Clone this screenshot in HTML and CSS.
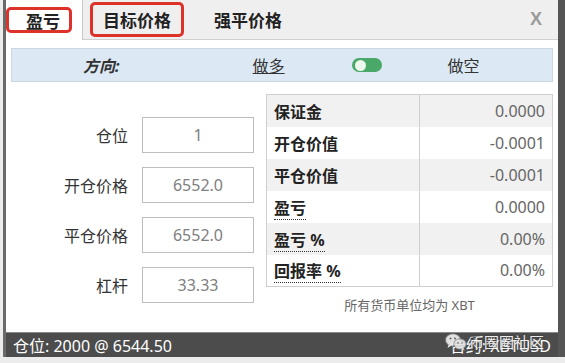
FILE: index.html
```html
<!DOCTYPE html>
<html lang="zh-CN">
<head>
    <meta charset="UTF-8">
    <meta name="viewport" content="width=device-width, initial-scale=1.0">
    <title>计算器</title>
    <link rel="stylesheet" href="styles.css">
</head>
<body>
    <div class="dialog">
        <!-- 标签栏 -->
        <div class="tabs">
            <div class="tab active"><span class="mark mark-pnl">盈亏</span></div>
            <div class="tab tab-target"><span class="mark mark-target">目标价格</span></div>
            <div class="tab tab-liq">强平价格</div>
            <div class="close">X</div>
        </div>

        <!-- 方向 -->
        <div class="direction">
            <span class="dir-label">方向:</span>
            <span class="dir-long">做多</span>
            <span class="toggle"><span class="knob"></span></span>
            <span class="dir-short">做空</span>
        </div>

        <div class="main">
            <!-- 输入 -->
            <div class="form">
                <div class="form-row">
                    <label>仓位</label>
                    <input class="field" type="text" value="1">
                </div>
                <div class="form-row">
                    <label>开仓价格</label>
                    <input class="field" type="text" value="6552.0">
                </div>
                <div class="form-row">
                    <label>平仓价格</label>
                    <input class="field" type="text" value="6552.0">
                </div>
                <div class="form-row">
                    <label>杠杆</label>
                    <input class="field" type="text" value="33.33">
                </div>
            </div>

            <!-- 结果 -->
            <div class="results">
                <table class="result-table">
                    <tr><th>保证金</th><td>0.0000</td></tr>
                    <tr><th>开仓价值</th><td>-0.0001</td></tr>
                    <tr><th>平仓价值</th><td>-0.0001</td></tr>
                    <tr><th><span class="dotted">盈亏</span></th><td>0.0000</td></tr>
                    <tr><th><span class="dotted">盈亏 %</span></th><td>0.00%</td></tr>
                    <tr><th><span class="dotted">回报率 %</span></th><td>0.00%</td></tr>
                </table>
                <p class="note">所有货币单位均为 XBT</p>
            </div>
        </div>

        <!-- 状态栏 -->
        <div class="status">
            <span>仓位: 2000 @ 6544.50</span>
            <span>合约: XBTUSD</span>
            <div class="watermark">
                <svg width="22" height="18" viewBox="0 0 22 18">
                    <ellipse cx="8" cy="7" rx="7.5" ry="6.2" fill="#f2f2f2" stroke="#777" stroke-width="0.8"/>
                    <path d="M3.5 11.5 L2.5 15 L6.5 12.6 Z" fill="#f2f2f2"/>
                    <ellipse cx="15" cy="11" rx="6.2" ry="5.2" fill="#e4e4e4" stroke="#777" stroke-width="0.8"/>
                    <path d="M18.5 15 L19.8 17.6 L16.2 15.8 Z" fill="#e4e4e4"/>
                    <circle cx="5.5" cy="5.5" r="1" fill="#666"/>
                    <circle cx="10" cy="5.5" r="1" fill="#666"/>
                    <circle cx="13" cy="10" r="0.8" fill="#666"/>
                    <circle cx="17" cy="10" r="0.8" fill="#666"/>
                </svg>
                <span>币圈圈社区</span>
            </div>
        </div>
    </div>
</body>
</html>
```

FILE: styles.css
```css
body {
    margin: 0;
    padding: 0;
    background-color: #ececec;
    font-family: 'Noto Sans', 'Noto Sans CJK SC', sans-serif;
}
.dialog {
    position: relative;
    margin-left: 3px;
    height: 357px;
    box-sizing: border-box;
    border-left: 3px solid #6a6a6a;
    border-right: 7px solid #555;
    background-color: #fff;
    display: flex;
    flex-direction: column;
}
.tabs {
    display: flex;
    align-items: center;
    height: 39px;
    background-color: #efefef;
    border-bottom: 1px solid #cfcfcf;
}
.tab {
    font-size: 17px;
    font-weight: bold;
    color: #222;
}
.tab.active {
    align-self: stretch;
    width: 76px;
    background-color: #fff;
    border-right: 1px solid #c8c8c8;
    margin-bottom: -1px;
    display: flex;
    align-items: center;
}
.mark {
    display: flex;
    align-items: center;
    justify-content: center;
    box-sizing: border-box;
    border: 3px solid #dd3229;
    border-radius: 5px;
}
.mark-pnl {
    width: 66px;
    height: 26px;
    padding-left: 8px;
}
.tab-target {
    margin-left: 7px;
}
.mark-target {
    width: 94px;
    height: 35px;
}
.tab-liq {
    margin-left: 30px;
}
.close {
    margin-left: auto;
    margin-right: 16px;
    font-family: 'Liberation Sans', sans-serif;
    font-size: 18px;
    font-weight: bold;
    color: #9a9a9a;
}
.direction {
    display: flex;
    align-items: center;
    height: 32px;
    margin: 8px 5px 0 5px;
    background-color: #dce9f4;
    border: 1px solid #c9d7e3;
    font-size: 16px;
    color: #333;
}
.dir-label {
    margin-left: 71px;
    font-weight: bold;
    font-style: italic;
}
.dir-long {
    margin-left: 133px;
    text-decoration: underline;
}
.toggle {
    margin-left: 67px;
    width: 30px;
    height: 14px;
    border-radius: 7px;
    background-color: #4aa868;
    display: flex;
    align-items: center;
}
.knob {
    width: 11px;
    height: 11px;
    margin-left: 3px;
    border-radius: 50%;
    background-color: #eef7ee;
}
.dir-short {
    margin-left: 66px;
}
.main {
    display: flex;
}
.form {
    padding-top: 35px;
    display: flex;
    flex-direction: column;
    gap: 14px;
}
.form-row {
    display: flex;
    align-items: center;
    gap: 14px;
}
.form-row label {
    width: 122px;
    text-align: right;
    font-size: 16px;
    color: #333;
}
.field {
    width: 112px;
    height: 36px;
    box-sizing: border-box;
    border: 1px solid #bdbdbd;
    text-align: center;
    font-family: 'Noto Sans', sans-serif;
    font-size: 16px;
    color: #808080;
    padding: 0;
}
.results {
    margin-left: 12px;
    margin-top: 12px;
    width: 287px;
}
.result-table {
    width: 287px;
    border-collapse: collapse;
    border: 1px solid #cfcfcf;
}
.result-table tr {
    height: 32px;
}
.result-table tr:nth-child(odd) {
    background-color: #f1f1f1;
}
.result-table th {
    width: 145px;
    padding: 0 0 0 7px;
    text-align: left;
    font-size: 16px;
    font-weight: bold;
    color: #222;
    border-right: 1px solid #cfcfcf;
}
.result-table td {
    padding: 0 7px 0 0;
    text-align: right;
    font-size: 16px;
    color: #666;
}
.dotted {
    border-bottom: 1px dotted #333;
}
.note {
    margin: 8px 0 0 0;
    text-align: center;
    font-size: 13px;
    color: #666;
}
.status {
    margin-top: auto;
    height: 24px;
    display: flex;
    align-items: center;
    justify-content: space-between;
    padding: 0 7px;
    background-color: #4c4c4c;
    border-top: 1px solid #8a8a8a;
    color: #fff;
    font-size: 16px;
}
.watermark {
    position: absolute;
    right: 14px;
    bottom: 5px;
    display: flex;
    align-items: center;
    gap: 2px;
    font-size: 15px;
    color: #fff;
    opacity: 0.9;
    text-shadow: 0 0 2px #333;
}
```
